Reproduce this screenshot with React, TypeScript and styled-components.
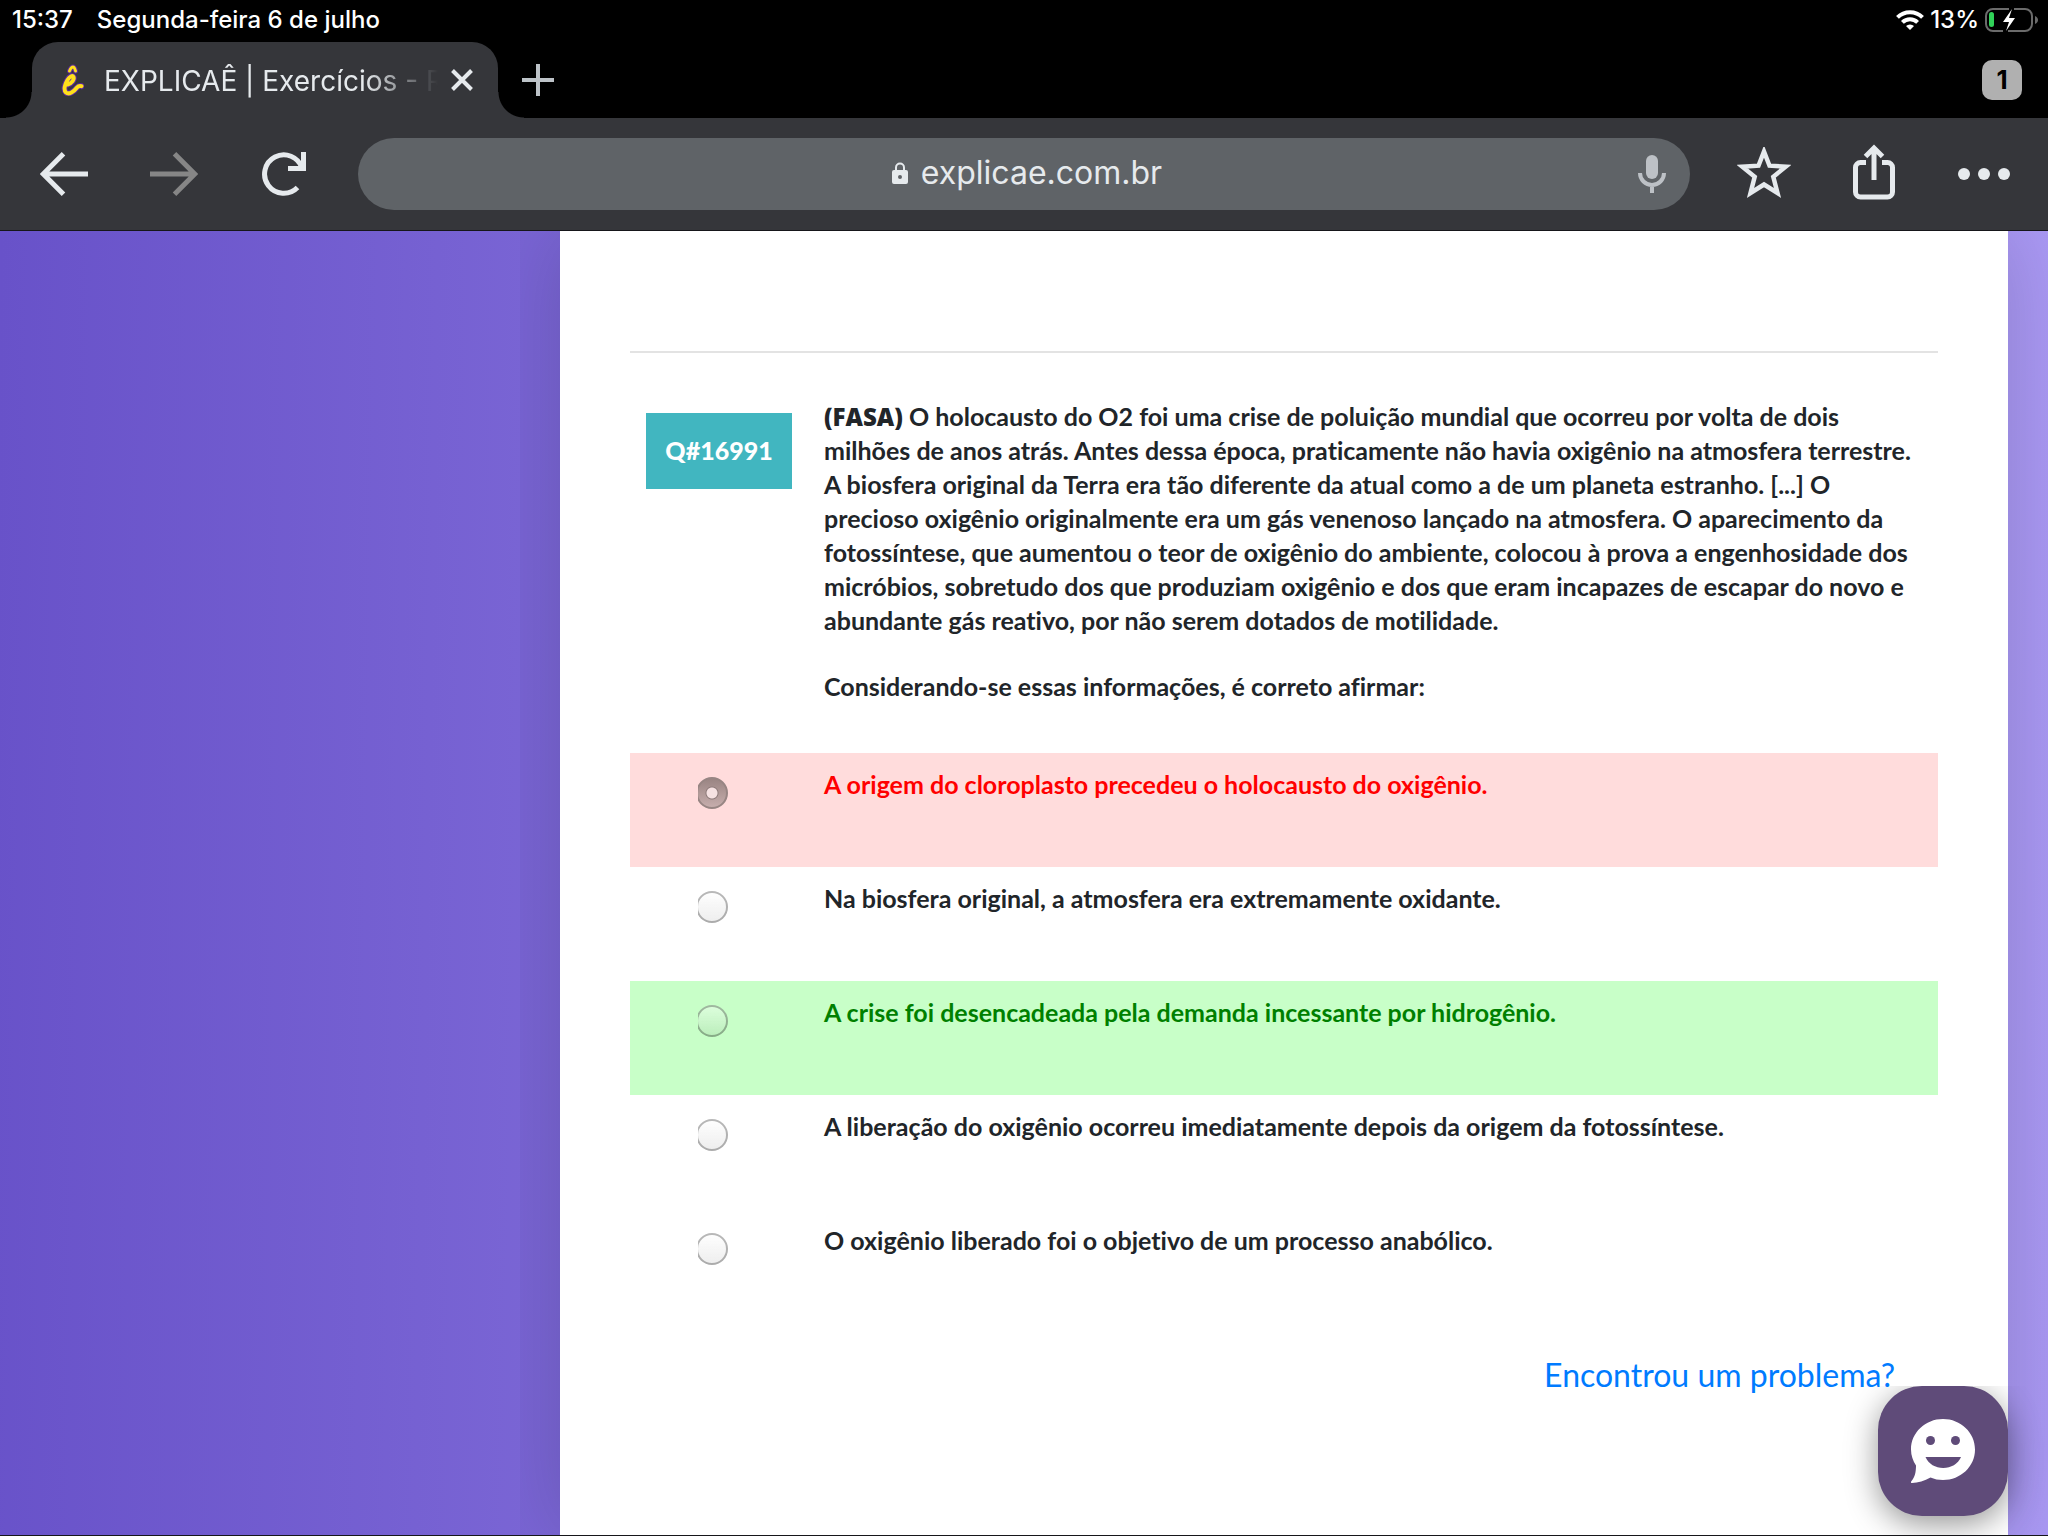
import React, { useState } from "react";
import styled, { createGlobalStyle } from "styled-components";

const ink = "#e6eaed";
const uiFont = `Inter, "Liberation Sans", sans-serif`;
const pageFont = `Lato, "Open Sans", sans-serif`;

const GlobalStyle = createGlobalStyle`
  *, *::before, *::after { box-sizing: border-box; }
  body { margin: 0; background: #000; }
  button { padding: 0; border: 0; background: none; color: inherit; font: inherit; cursor: pointer; }
  svg { display: block; flex: none; }
`;

const Screen = styled.div`
  display: flex;
  flex-direction: column;
  min-height: 100vh;
  font-family: ${uiFont};
`;

/* ---------- status bar ---------- */

const StatusBar = styled.header`
  display: flex;
  align-items: center;
  justify-content: space-between;
  height: 42px;
  padding: 0 9px 2px 12px;
  color: #fff;
  font-size: 24px;
  font-weight: 500;
  line-height: 28px;
`;

const StatusGroup = styled.div<{ $gap: number }>`
  display: flex;
  align-items: center;
  gap: ${(p) => p.$gap}px;
`;

/* ---------- tab strip ---------- */

const TabStrip = styled.div`
  display: flex;
  align-items: center;
  justify-content: space-between;
  height: 76px;
  padding: 0 26px 0 32px;
`;

const TabGroup = styled.div`
  display: flex;
  align-items: center;
  height: 100%;
`;

const Tab = styled.div`
  position: relative;
  display: flex;
  align-items: center;
  width: 466px;
  height: 100%;
  padding: 0 24px 0 28px;
  border-radius: 26px 26px 0 0;
  background: #35363a;
  color: ${ink};

  &::before,
  &::after {
    content: "";
    position: absolute;
    bottom: 0;
    width: 26px;
    height: 26px;
  }
  &::before {
    right: 100%;
    background: radial-gradient(circle at 0 0, transparent 25px, #35363a 26px);
  }
  &::after {
    left: 100%;
    background: radial-gradient(circle at 100% 0, transparent 25px, #35363a 26px);
  }
`;

const TabTitle = styled.span`
  flex: 1;
  margin-left: 20px;
  padding-top: 2px;
  overflow: hidden;
  white-space: nowrap;
  font-size: 28px;
  line-height: 36px;
  mask-image: linear-gradient(90deg, #000 78%, transparent);
`;

const CloseTab = styled.button`
  display: grid;
  place-items: center;
  width: 24px;
  height: 40px;
  margin-left: 12px;
`;

const NewTab = styled.button`
  display: grid;
  place-items: center;
  width: 80px;
  height: 76px;
  color: #bdc3c8;
`;

const TabCount = styled.button`
  width: 40px;
  height: 40px;
  border-radius: 10px;
  background: #b0b0b0;
  color: #000;
  font-size: 26px;
  font-weight: 700;
  line-height: 40px;
`;

/* ---------- toolbar ---------- */

const Toolbar = styled.nav`
  display: flex;
  align-items: center;
  height: 113px;
  padding: 0 9px;
  border-bottom: 1px solid #16161a;
  background: #35363a;
  color: ${ink};
`;

const ToolButton = styled.button`
  display: grid;
  place-items: center;
  width: 110px;
  height: 112px;

  &:disabled { color: #868686; cursor: default; }
`;

const AddressBar = styled.div`
  display: grid;
  grid-template-columns: 82px 1fr 76px;
  align-items: center;
  flex: 1;
  height: 72px;
  margin: 0 19px;
  border-radius: 36px;
  background: #5f6367;
`;

const AddressField = styled.label`
  grid-column: 2;
  display: flex;
  align-items: center;
  justify-content: center;
  gap: 13px;
  padding-bottom: 2px;
`;

const AddressInput = styled.input`
  field-sizing: content;
  padding: 0;
  border: 0;
  outline: 0;
  background: none;
  color: ${ink};
  font: 400 32px/40px ${uiFont};
`;

const MicButton = styled.button`
  display: grid;
  place-items: center;
  height: 72px;
  color: #bdc1c6;
`;

/* ---------- page ---------- */

const Page = styled.div`
  display: flex;
  flex: 1;
  padding-left: 520px;
  border-bottom: 1px solid #16161a;
  background: linear-gradient(91deg, #6852c9, #aa99f4);
  color: #212529;
  font-family: ${pageFont};
  font-variant-ligatures: none;
`;

const Content = styled.main`
  display: flex;
  flex: 1;
  padding: 0 40px;
  overflow: hidden;
`;

const Card = styled.section`
  flex: 1;
  padding: 120px 70px 0;
  background: #fff;
  box-shadow: 0 0 80px rgba(0, 0, 0, 0.16);
`;

const Divider = styled.hr`
  height: 2px;
  margin: 0 0 46px;
  border: 0;
  background: #e3e3e3;
`;

const Columns = styled.div`
  display: grid;
  grid-template-columns: 162px 1fr;
  align-items: start;
  gap: 32px;
  padding-right: 16px;
`;

const QuestionCode = styled.h2`
  margin: 14px 0 0 16px;
  padding-bottom: 2px;
  background: #41b6c0;
  color: #fff;
  text-align: center;
  font-size: 25px;
  font-weight: 900;
  line-height: 74px;
`;

const Statement = styled.div`
  display: grid;
  gap: 32px;
  font-size: 25px;
  font-weight: 700;
  line-height: 34px;

  p { margin: 0; }
  strong { font: 800 24px/24px "Open Sans", sans-serif; }
`;

const Options = styled.fieldset`
  min-width: 0;
  margin: 50px 0 0;
  padding: 0;
  border: 0;
`;

type State = "wrong" | "right" | "plain";
const tints: Record<State, [string, string]> = {
  wrong: ["#ffdcdc", "#ff0000"],
  right: ["#c8ffc8", "#008000"],
  plain: ["transparent", "#212529"],
};

const Option = styled.label<{ $state: State }>`
  display: grid;
  grid-template-columns: 162px 1fr;
  align-items: start;
  gap: 32px;
  min-height: 114px;
  padding: 14px 16px 0 0;
  background: ${(p) => tints[p.$state][0]};
  color: ${(p) => tints[p.$state][1]};
  font-size: 25px;
  font-weight: 700;
  line-height: 34px;
`;

const RadioClip = styled.span`
  display: flex;
  justify-content: flex-end;
  width: 30px;
  margin: 10px 0 0 68px;
  overflow: hidden;
`;

const Radio = styled.input`
  flex: none;
  width: 32px;
  height: 32px;
  margin: 0;
  appearance: none;
  border: 2px solid rgba(0, 0, 0, 0.28);
  border-radius: 50%;
  background: linear-gradient(rgba(255, 255, 255, 0.4), rgba(0, 0, 0, 0.07)) border-box;

  &:checked {
    border-color: #978583;
    background:
      radial-gradient(circle, #f6e2e2 5px, #8e7b7a 6px, transparent 7px),
      linear-gradient(#9a8583, #c6adac);
  }
`;

const ProblemRow = styled.div`
  display: flex;
  justify-content: flex-end;
  padding: 32px 43px 0 0;
`;

const ProblemLink = styled.a`
  color: #007bff;
  font-size: 32px;
  line-height: 40px;
  text-decoration: none;
`;

const ChatWidget = styled.div`
  position: fixed;
  right: 40px;
  bottom: 20px;
  clip-path: inset(0 -40px -19px -40px);
`;

const ChatButton = styled.button`
  display: grid;
  place-items: center;
  width: 130px;
  height: 130px;
  border-radius: 44px;
  background: #5f4b79;
  box-shadow: 0 8px 32px rgba(0, 0, 0, 0.42);
`;

/* ---------- icons ---------- */

const WifiIcon = () => (
  <svg width="28" height="20" viewBox="0 0 28 20" fill="none" stroke="#fff" strokeWidth="4">
    <path d="M1.5 7.4a17.6 17.6 0 0 1 25 0" />
    <path d="M6.4 12.3a10.8 10.8 0 0 1 15.2 0" />
    <path d="M14 20l-4-4a5.8 5.8 0 0 1 8 0z" fill="#fff" stroke="none" />
  </svg>
);

const BatteryIcon = () => (
  <svg width="54" height="24" viewBox="0 0 54 24">
    <path d="M24 1H8a7 7 0 0 0-7 7v8a7 7 0 0 0 7 7h10M29 1h11a7 7 0 0 1 7 7v8a7 7 0 0 1-7 7H23" fill="none" stroke="#6b6b6b" strokeWidth="2" />
    <rect x="4" y="4" width="5" height="15" rx="2.5" fill="#30d158" />
    <path d="M27 1L18 14h6l-3 9 9-13h-6z" fill="#fff" />
    <path d="M50 8c4 1.500 4 6.500 0 8z" fill="#6b6b6b" />
  </svg>
);

const Favicon = () => (
  <svg width="24" height="32" viewBox="0 0 24 32" fill="none" strokeLinecap="round" strokeLinejoin="round">
    {[["#5b2a9d", 6], ["#ffe01b", 4]].map(([color, width]) => (
      <g key={color} stroke={color as string} strokeWidth={width as number}>
        <path d="M9.500 7C10.500 4.500 11.500 3 13 3c1.500 0 2 2 2.500 4" strokeWidth={(width as number) - 1} />
        <path d="M8 20.500c4-1.500 6.500-5 5.500-7.500-1-2-4-.5-6 3-2.500 4.500-4 10-1.500 12.500 3 2.500 8-1 11-5 1.200-1.500 2.500-2 4.500-1.300" />
      </g>
    ))}
  </svg>
);

const CloseIcon = () => (
  <svg width="22" height="24" viewBox="0 0 22 24" fill="none" stroke="currentColor" strokeWidth="4">
    <path d="M1.500 2.500l19 19M20.500 2.500l-19 19" />
  </svg>
);

const PlusIcon = () => (
  <svg width="32" height="32" viewBox="0 0 32 32" fill="none" stroke="currentColor" strokeWidth="4">
    <path d="M16 0v32M0 16h32" />
  </svg>
);

const ArrowIcon = ({ forward = false }: { forward?: boolean }) => (
  <svg width="48" height="44" viewBox="0 0 48 44" fill="none" stroke="currentColor" strokeWidth="5">
    <path d={forward ? "M0 22h44M24.500 1.800L44.700 22 24.500 42.200" : "M48 22H4M23.500 1.800L3.300 22l20.200 20.200"} />
  </svg>
);

const ReloadIcon = () => (
  <svg width="44" height="44" viewBox="0 0 44 44" fill="none" stroke="currentColor" strokeWidth="5">
    <path d="M35.500 35.500A19.200 19.200 0 1 1 40 16" />
    <path d="M41.500 0v16.500H26" />
  </svg>
);

const LockIcon = () => (
  <svg width="16" height="22" viewBox="0 0 16 22">
    <path d="M4 9V5.500a4 4 0 0 1 8 0V9" fill="none" stroke={ink} strokeWidth="2" />
    <path fillRule="evenodd" d="M2 8h12a2 2 0 0 1 2 2v10a2 2 0 0 1-2 2H2a2 2 0 0 1-2-2V10a2 2 0 0 1 2-2zm6 5a2 2 0 1 0 0 4 2 2 0 0 0 0-4z" fill={ink} />
  </svg>
);

const MicIcon = () => (
  <svg width="28" height="38" viewBox="0 0 28 38">
    <rect x="8" y="0" width="12" height="24" rx="6" fill="currentColor" />
    <path d="M2 18a12 12 0 0 0 24 0M14 30v8" fill="none" stroke="currentColor" strokeWidth="4" />
  </svg>
);

const StarIcon = () => (
  <svg width="54" height="54" viewBox="0 2 54 54" fill="none" stroke="currentColor" strokeWidth="4.500">
    <path d="M27 6.500l5.500 14.200 16.200 1-12.400 10.100 4.200 16.200L27 39.500 13.500 48l4.200-16.200L5.300 21.700l16.200-1z" />
  </svg>
);

const ShareIcon = () => (
  <svg width="42" height="54" viewBox="0 3 42 54" fill="none" stroke="currentColor" strokeWidth="5" overflow="visible">
    <path d="M13 18.500H7.500a5 5 0 0 0-5 5V48a5 5 0 0 0 5 5h27a5 5 0 0 0 5-5V23.500a5 5 0 0 0-5-5H29" />
    <path d="M21 36V4M12.500 12.500L21 4l8.500 8.500" />
  </svg>
);

const DotsIcon = () => (
  <svg width="52" height="12" viewBox="0 0 52 12" fill="currentColor">
    <circle cx="6" cy="6" r="6" />
    <circle cx="26" cy="6" r="6" />
    <circle cx="46" cy="6" r="6" />
  </svg>
);

const ChatIcon = () => (
  <svg width="64" height="64" viewBox="0 0 64 64">
    <path d="M32 0c17.700 0 32 13.500 32 30.500S49.700 61 32 61c-4.500 0-8.700-.8-12.500-2.500C13.500 61.500 7 64 1 64c-1.200 0-1.300-1-.5-2 3.500-4 4.500-9 4.500-15.500C2 42 0 36.500 0 30.500 0 13.500 14.300 0 32 0z" fill="#fff" />
    <circle cx="19.500" cy="21.500" r="4.500" fill="#5f4b79" />
    <circle cx="44.500" cy="21.500" r="4.500" fill="#5f4b79" />
    <path d="M14.500 38h35.500C47 45 40 49 32.200 49S17.500 45 14.500 38z" fill="#5f4b79" />
  </svg>
);

/* ---------- app ---------- */

const answers: { text: string; state: State }[] = [
  { text: "A origem do cloroplasto precedeu o holocausto do oxigênio.", state: "wrong" },
  { text: "Na biosfera original, a atmosfera era extremamente oxidante.", state: "plain" },
  { text: "A crise foi desencadeada pela demanda incessante por hidrogênio.", state: "right" },
  { text: "A liberação do oxigênio ocorreu imediatamente depois da origem da fotossíntese.", state: "plain" },
  { text: "O oxigênio liberado foi o objetivo de um processo anabólico.", state: "plain" },
];

export default function App() {
  const [address, setAddress] = useState("explicae.com.br");

  return (
    <Screen>
      <GlobalStyle />
      <StatusBar>
        <StatusGroup $gap={24}>
          <span>15:37</span>
          <span>Segunda-feira 6 de julho</span>
        </StatusGroup>
        <StatusGroup $gap={6}>
          <WifiIcon />
          <span>13%</span>
          <BatteryIcon />
        </StatusGroup>
      </StatusBar>

      <TabStrip>
        <TabGroup>
          <Tab>
            <Favicon />
            <TabTitle>EXPLICAÊ | Exercícios - R</TabTitle>
            <CloseTab aria-label="Fechar guia"><CloseIcon /></CloseTab>
          </Tab>
          <NewTab aria-label="Nova guia"><PlusIcon /></NewTab>
        </TabGroup>
        <TabCount>1</TabCount>
      </TabStrip>

      <Toolbar>
        <ToolButton aria-label="Voltar"><ArrowIcon /></ToolButton>
        <ToolButton aria-label="Avançar" disabled><ArrowIcon forward /></ToolButton>
        <ToolButton aria-label="Recarregar"><ReloadIcon /></ToolButton>
        <AddressBar>
          <AddressField>
            <LockIcon />
            <AddressInput aria-label="Endereço" value={address} onChange={(e) => setAddress(e.target.value)} />
          </AddressField>
          <MicButton aria-label="Pesquisa por voz"><MicIcon /></MicButton>
        </AddressBar>
        <ToolButton aria-label="Favoritos"><StarIcon /></ToolButton>
        <ToolButton aria-label="Compartilhar"><ShareIcon /></ToolButton>
        <ToolButton aria-label="Mais opções"><DotsIcon /></ToolButton>
      </Toolbar>

      <Page>
        <Content>
          <Card>
            <Divider />
            <Columns>
              <QuestionCode>Q#16991</QuestionCode>
              <Statement>
                <p>
                  <strong>(FASA)</strong> O holocausto do O2 foi uma crise de poluição mundial que ocorreu por volta de
                  dois milhões de anos atrás. Antes dessa época, praticamente não havia oxigênio na atmosfera
                  terrestre. A biosfera original da Terra era tão diferente da atual como a de um planeta estranho.
                  [...] O precioso oxigênio originalmente era um gás venenoso lançado na atmosfera. O aparecimento da
                  fotossíntese, que aumentou o teor de oxigênio do ambiente, colocou à prova a engenhosidade dos
                  micróbios, sobretudo dos que produziam oxigênio e dos que eram incapazes de escapar do novo e
                  abundante gás reativo, por não serem dotados de motilidade.
                </p>
                <p>Considerando-se essas informações, é correto afirmar:</p>
              </Statement>
            </Columns>
            <Options aria-label="Alternativas">
              {answers.map(({ text, state }) => (
                <Option key={text} $state={state}>
                  <RadioClip>
                    <Radio type="radio" name="answer" defaultChecked={state === "wrong"} />
                  </RadioClip>
                  <span>{text}</span>
                </Option>
              ))}
            </Options>
            <ProblemRow>
              <ProblemLink href="#problema">Encontrou um problema?</ProblemLink>
            </ProblemRow>
          </Card>
        </Content>
      </Page>

      <ChatWidget>
        <ChatButton aria-label="Abrir chat"><ChatIcon /></ChatButton>
      </ChatWidget>
    </Screen>
  );
}
